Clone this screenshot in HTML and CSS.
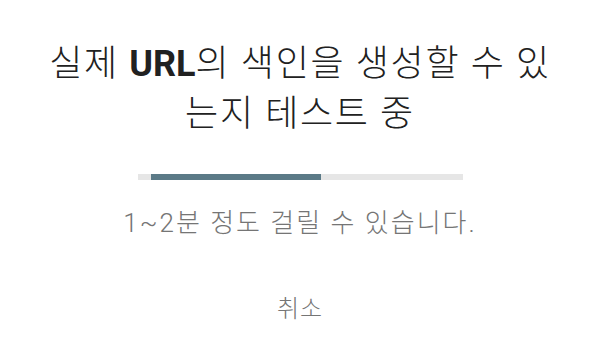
FILE: index.html
```html
<!DOCTYPE html>
<html lang="ko">
<head>
<meta charset="utf-8">
<link rel="stylesheet" href="styles.css">
</head>
<body>
<div class="dialog">
  <h1 class="title">실제 <b>URL</b>의 색인을 생성할 수 있<br>는지 테스트 중</h1>
  <div class="progress"><div class="progress-bar"></div></div>
  <p class="note">1~2분 정도 걸릴 수 있습니다.</p>
  <div class="actions"><button class="cancel">취소</button></div>
</div>
</body>
</html>
```
FILE: styles.css
```css
html, body {
  margin: 0;
  padding: 0;
  background: #ffffff;
}
body {
  width: 600px;
  height: 355px;
  overflow: hidden;
  font-family: Roboto, "Noto Sans CJK KR", sans-serif;
}
.dialog {
  display: flex;
  flex-direction: column;
  align-items: center;
  padding-top: 39px;
}
.title {
  margin: 0;
  font-size: 36px;
  font-weight: 300;
  line-height: 50px;
  letter-spacing: 1.7px;
  color: #212121;
  text-align: center;
}
.title b {
  font-weight: 700;
  letter-spacing: 0;
}
.progress {
  margin-top: 35px;
  width: 325px;
  height: 6px;
  background: #e6e6e6;
  position: relative;
}
.progress-bar {
  position: absolute;
  left: 13px;
  top: 0;
  width: 170px;
  height: 6px;
  background: #5b7a87;
}
.note {
  margin: 25px 0 0;
  font-size: 26px;
  font-weight: 300;
  line-height: 36px;
  letter-spacing: 2px;
  color: #757575;
}
.actions {
  margin-top: 52px;
}
.cancel {
  border: 0;
  background: transparent;
  padding: 0;
  font-family: inherit;
  font-size: 24px;
  font-weight: 300;
  line-height: 32px;
  letter-spacing: 1px;
  color: #757575;
}
```
